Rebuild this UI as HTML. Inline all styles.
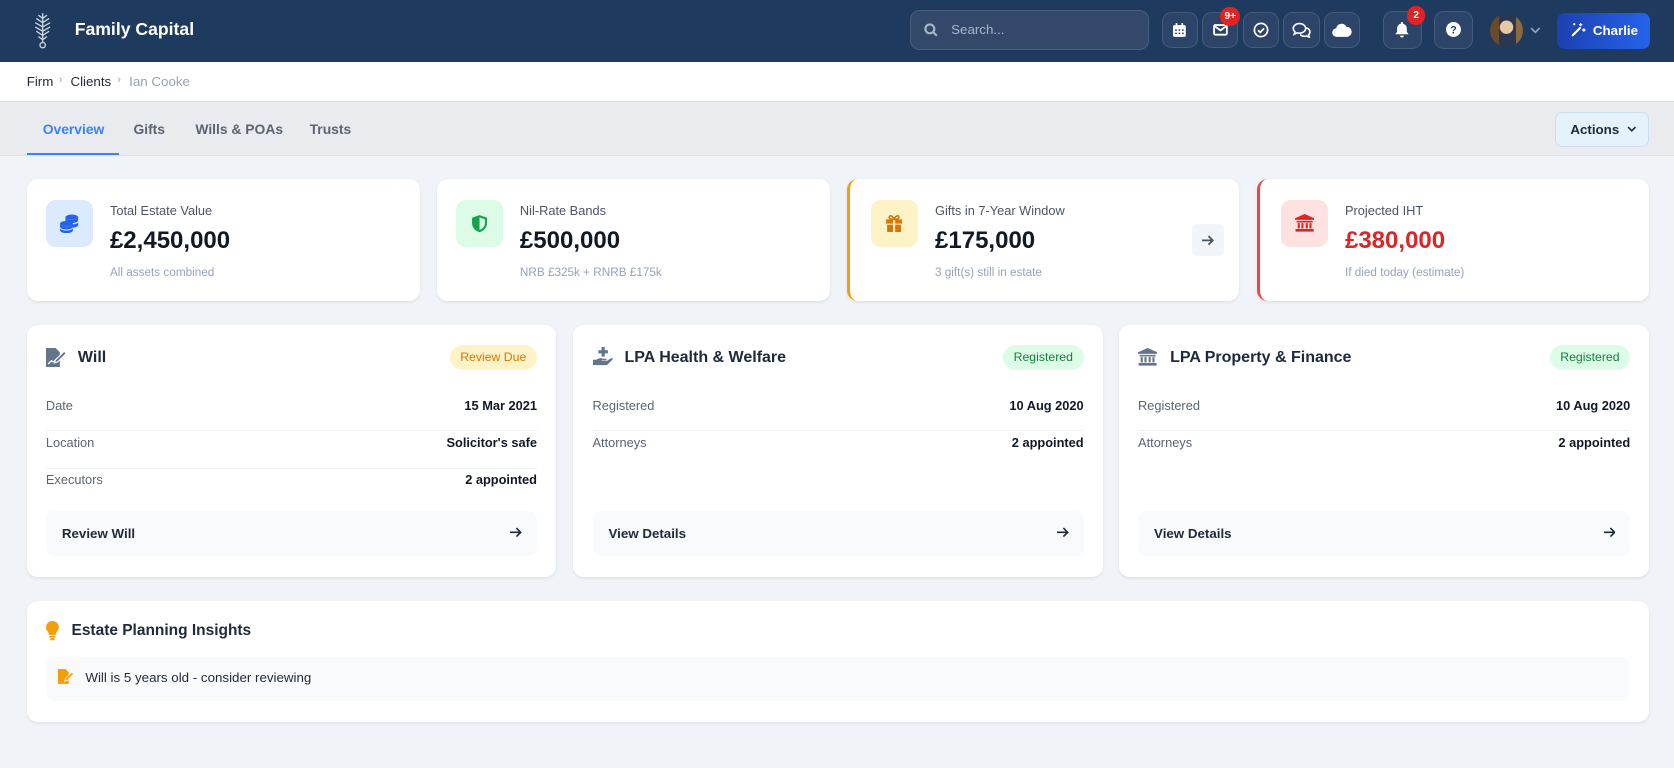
<!DOCTYPE html>
<html><head><meta charset="utf-8"><style>
*{box-sizing:border-box;margin:0;padding:0}
html,body{width:1674px;height:768px;overflow:hidden;background:#f0f3f7}
body{font-family:"Liberation Sans",sans-serif;color:#1e293b}
#z{zoom:1.06760;width:1568px;height:720px;position:relative}
.abs{position:absolute}
.hdr{position:absolute;left:0;top:0;width:1568px;height:58px;background:#1f3a5f}
.title{position:absolute;left:70px;top:18px;color:#fff;font-size:16.5px;font-weight:bold}
.search{position:absolute;left:852px;top:9px;width:224px;height:38px;border-radius:9px;background:#34496a;border:1px solid #4a5f7e}
.search span{position:absolute;left:38px;top:11px;color:#a9b6c8;font-size:12.5px}
.ib{position:absolute;top:11px;width:34px;height:34px;border-radius:9px;background:#2c4468;border:1px solid #445b7c;display:flex;align-items:center;justify-content:center}
.badge{position:absolute;background:#e02424;color:#fff;font-size:9.5px;font-weight:bold;border-radius:9px;height:17px;min-width:17px;padding:0 4px;display:flex;align-items:center;justify-content:center}
.crumb{position:absolute;top:58px;left:0;width:1568px;height:37px;background:#fff;font-size:12.5px}
.tabs{position:absolute;top:95px;left:0;width:1568px;height:51px;background:#e9ebef;border-top:1px solid #dfe3e8;border-bottom:1px solid #dfe3e8}
.tab{position:absolute;top:17px;font-size:13px;font-weight:bold;color:#5b6473}
.card{position:absolute;background:#fff;border-radius:10px;box-shadow:0 1px 3px rgba(0,0,0,.08)}
.sicon{position:absolute;left:18px;top:19px;width:44px;height:44px;border-radius:9px;display:flex;align-items:center;justify-content:center}
.slab{position:absolute;left:78px;top:22px;font-size:12px;color:#4b5563}
.sval{position:absolute;left:78px;top:45px;font-size:22.5px;font-weight:bold;color:#111827}
.ssub{position:absolute;left:78px;top:81px;font-size:11px;color:#94a3b8}
.ct{position:absolute;left:48px;top:23px;font-size:15px;font-weight:bold;color:#1e293b}
.pill{position:absolute;right:18px;top:19px;height:24px;border-radius:12px;font-size:11.5px;padding:0 10px;line-height:24px}
.row{position:absolute;left:18px;right:18px;height:34px;font-size:12px;color:#5b6473;border-bottom:1px solid #edf0f3}
.row b{position:absolute;right:0;top:0;color:#111827}
.btn{position:absolute;left:18px;right:18px;top:175px;height:42px;background:#f8fafc;border-radius:8px;font-size:12.5px;font-weight:bold;color:#1e293b}
</style></head><body><div id="z">
<div class="hdr">
 <svg class="abs" style="left:30px;top:11px" width="20" height="36" viewBox="0 0 20 36" fill="none" stroke="#c9d3e0" stroke-width="1.3"><path d="M10 1v27M10 6l-4-3M10 6l4-3M10 10l-6-4M10 10l6-4M10 14l-7-4M10 14l7-4M10 18l-7-4M10 18l7-4M10 22l-6-4M10 22l6-4M10 26l-4-3M10 26l4-3"/><circle cx="10" cy="31" r="2.5"/></svg>
 <div class="title">Family Capital</div>
 <div class="search"><svg class="abs" style="left:13px;top:12px" width="13" height="13" viewBox="0 0 13 13" fill="none" stroke="#a9b6c8" stroke-width="2"><circle cx="5.5" cy="5.5" r="4.2"/><path d="M8.7 8.7l3.3 3.3"/></svg><span>Search...</span></div>
 <div class="ib" style="left:1088px"><svg width="12" height="13" viewBox="0 0 12 13" fill="#fff"><rect x="0" y="2" width="12" height="11" rx="1.5"/><rect x="2.5" y="0" width="1.6" height="3"/><rect x="7.9" y="0" width="1.6" height="3"/><path d="M2 6h1.6v1.4H2zM5.2 6h1.6v1.4H5.2zM8.4 6h1.6v1.4H8.4zM2 9h1.6v1.4H2zM5.2 9h1.6v1.4H5.2zM8.4 9h1.6v1.4H8.4z" fill="#2c4468"/></svg></div>
 <div class="ib" style="left:1126px"><svg width="14" height="11" viewBox="0 0 14 11" fill="none" stroke="#fff" stroke-width="1.7"><rect x="1" y="1" width="12" height="9" rx="1.2"/><path d="M1.5 2l5.5 4 5.5-4"/></svg></div>
 <div class="badge" style="left:1143px;top:7px">9+</div>
 <div class="ib" style="left:1164px"><svg width="15" height="15" viewBox="0 0 15 15" fill="none" stroke="#fff" stroke-width="1.6"><circle cx="7.5" cy="7.5" r="6.2"/><path d="M4.8 7.7l2 2 3.6-3.8"/></svg></div>
 <div class="ib" style="left:1202px"><svg width="18" height="15" viewBox="0 0 18 15" fill="none" stroke="#fff" stroke-width="1.5"><path d="M7 1.5c3.3 0 5.8 2 5.8 4.5S10.3 10.5 7 10.5c-.8 0-1.5-.1-2.2-.3L2 11.5l.8-2.4C1.8 8.3 1.2 7.2 1.2 6 1.2 3.5 3.7 1.5 7 1.5z"/><path d="M13.5 5.5c2 .7 3.3 2.2 3.3 3.9 0 1-.5 2-1.3 2.7l.6 2-2.3-1c-.6.2-1.3.3-2 .3-1.7 0-3.2-.6-4.1-1.6"/></svg></div>
 <div class="ib" style="left:1240px"><svg width="18" height="13" viewBox="0 0 18 13" fill="#fff"><path d="M4.5 13A4 4 0 014 5a5 5 0 019.4-1.5A4.5 4.5 0 0114 13z"/></svg></div>
 <div class="ib" style="left:1295px;top:10px;width:37px;height:36px"><svg width="13" height="15" viewBox="0 0 13 15" fill="#fff"><path d="M6.5 0c.6 0 1 .4 1 1v.6c2.2.5 3.6 2.3 3.6 4.6v3l1.6 2.3H.3l1.6-2.3v-3c0-2.3 1.4-4.1 3.6-4.6V1c0-.6.4-1 1-1zM4.8 12.8h3.4a1.7 1.7 0 01-3.4 0z"/></svg></div>
 <div class="badge" style="left:1318px;top:6px">2</div>
 <div class="ib" style="left:1343px;top:10px;width:37px;height:36px"><svg width="14" height="14" viewBox="0 0 14 14"><circle cx="7" cy="7" r="7" fill="#fff"/><text x="7" y="10.8" font-size="10" font-weight="bold" text-anchor="middle" fill="#1f3a5f" font-family="Liberation Sans">?</text></svg></div>
 <div class="abs" style="left:1396px;top:13px;width:31px;height:31px;border-radius:50%;background:radial-gradient(circle at 50% 40%,#e8c6a8 0 25%,#2b3650 27% 100%);overflow:hidden"><div class="abs" style="left:0;top:0;width:8px;height:31px;background:#6b4a2b"></div><div class="abs" style="right:0;top:0;width:7px;height:31px;background:#8a6a3e"></div></div>
 <svg class="abs" style="left:1433px;top:25px" width="10" height="7" viewBox="0 0 10 7" fill="none" stroke="#9aa8bb" stroke-width="1.5"><path d="M1 1l4 4 4-4"/></svg>
 <div class="abs" style="left:1458px;top:12px;width:88px;height:34px;border-radius:7px;background:linear-gradient(90deg,#1e40af,#2563eb);color:#fff;font-size:12.5px;font-weight:bold;line-height:34px;padding-left:34px">Charlie</div>
 <svg class="abs" style="left:1471px;top:21px" width="15" height="15" viewBox="0 0 15 15" fill="none" stroke="#fff" stroke-width="2"><path d="M2 13L10 5"/><path d="M10 1v3M8.5 2.5h3M13 6v3M11.5 7.5h3M4 1v2M3 2h2" stroke-width="1.3"/></svg>
</div>
<div class="crumb"><span class="abs" style="left:25px;top:11px;color:#1e293b">Firm</span><span class="abs" style="left:55px;top:11px;color:#9aa3ae;font-size:10px">›</span><span class="abs" style="left:66px;top:11px;color:#1e293b">Clients</span><span class="abs" style="left:110px;top:11px;color:#9aa3ae;font-size:10px">›</span><span class="abs" style="left:121px;top:11px;color:#94a3b8">Ian Cooke</span></div>
<div class="tabs">
 <span class="tab" style="left:40px;color:#3b82f6">Overview</span>
 <div class="abs" style="left:25px;top:47px;width:86px;height:2px;background:#3b82f6"></div>
 <span class="tab" style="left:125px">Gifts</span>
 <span class="tab" style="left:183px">Wills &amp; POAs</span>
 <span class="tab" style="left:290px">Trusts</span>
 <div class="abs" style="left:1457px;top:9px;width:88px;height:33px;border-radius:7px;background:#e6f2fb;border:1px solid #c9dff0;font-size:12.5px;font-weight:bold;color:#1e293b;line-height:31px;padding-left:13px">Actions<svg class="abs" style="left:66px;top:12px" width="9" height="6" viewBox="0 0 9 6" fill="none" stroke="#1e293b" stroke-width="1.5"><path d="M1 1l3.5 3.5L8 1"/></svg></div>
</div>

<div class="card" style="left:25px;top:168px;width:368px;height:114px">
 <div class="sicon" style="background:#dbeafe"><svg width="20" height="18" viewBox="0 0 20 18" fill="#2563eb"><ellipse cx="12" cy="3" rx="6" ry="2.5"/><path d="M6 3v3c0 1.4 2.7 2.5 6 2.5s6-1.1 6-2.5V3c0 1.4-2.7 2.5-6 2.5S6 4.4 6 3zM12 9.8v3c2.6 0 6-.9 6-2.3V7.5c0 1.4-3 2.3-6 2.3z"/><ellipse cx="7" cy="9" rx="6" ry="2.5"/><path d="M1 9v3c0 1.4 2.7 2.5 6 2.5s6-1.1 6-2.5V9c0 1.4-2.7 2.5-6 2.5S1 10.4 1 9zM1 13v2.5C1 16.9 3.7 18 7 18s6-1.1 6-2.5V13c0 1.4-2.7 2.5-6 2.5S1 14.4 1 13z"/></svg></div>
 <div class="slab">Total Estate Value</div><div class="sval">£2,450,000</div><div class="ssub">All assets combined</div>
</div>
<div class="card" style="left:409px;top:168px;width:368px;height:114px">
 <div class="sicon" style="background:#dcfce7"><svg width="16" height="18" viewBox="0 0 16 18"><path d="M8 1l7 2.5v5c0 4.2-3 7.4-7 8.5-4-1.1-7-4.3-7-8.5v-5z" fill="#16a34a"/><path d="M8 3.2l5 1.8v3.6c0 3-2.1 5.4-5 6.3z" fill="#dcfce7"/></svg></div>
 <div class="slab">Nil-Rate Bands</div><div class="sval">£500,000</div><div class="ssub">NRB £325k + RNRB £175k</div>
</div>
<div class="card" style="left:793px;top:168px;width:368px;height:114px;border-left:3px solid #f59e0b">
 <div class="sicon" style="left:20px;background:#fef3c7"><svg width="17" height="17" viewBox="0 0 17 17" fill="#d97706"><path d="M1 5h15v4H1zM2 10h13v7H2z"/><path d="M7.5 5h2v12h-2z" fill="#fef3c7"/><path d="M8.5 5C7 1 4 1 4 3s3 2 4.5 2zM8.5 5C10 1 13 1 13 3s-3 2-4.5 2z" fill="none" stroke="#d97706" stroke-width="1.5"/></svg></div>
 <div class="slab" style="left:80px">Gifts in 7-Year Window</div><div class="sval" style="left:80px">£175,000</div><div class="ssub" style="left:80px">3 gift(s) still in estate</div>
 <div class="abs" style="left:321px;top:42px;width:30px;height:30px;border-radius:6px;background:#f1f5f9"><svg class="abs" style="left:8px;top:9px" width="13" height="12" viewBox="0 0 13 12" fill="none" stroke="#475569" stroke-width="1.7"><path d="M1 6h10M7 2l4 4-4 4"/></svg></div>
</div>
<div class="card" style="left:1177px;top:168px;width:368px;height:114px;border-left:3px solid #ef4444">
 <div class="sicon" style="left:20px;background:#fee2e2"><svg width="18" height="17" viewBox="0 0 18 17" fill="#dc2626"><path d="M9 0l9 4v1.5H0V4z"/><path d="M1.5 6.5h15v1.5h-15zM2.5 8.5h2v5h-2zM6 8.5h2v5H6zM10 8.5h2v5h-2zM13.5 8.5h2v5h-2zM0.5 14h17v2.5H.5z"/></svg></div>
 <div class="slab" style="left:80px">Projected IHT</div><div class="sval" style="left:80px;color:#dc2626">£380,000</div><div class="ssub" style="left:80px">If died today (estimate)</div>
</div>

<div class="card" style="left:25px;top:304px;width:496px;height:236px">
 <svg class="abs" style="left:18px;top:22px" width="20" height="18" viewBox="0 0 20 18"><path d="M0 0h9l4 4v14H0z" fill="#64748b"/><path d="M2 15l3-3 2 1 3-3" fill="none" stroke="#fff" stroke-width="1.2"/><path d="M9 11l8-8 2 2-8 8-3 1z" fill="#64748b" stroke="#fff" stroke-width="1"/></svg>
 <div class="ct">Will</div>
 <div class="pill" style="background:#fef3c7;color:#d97706">Review Due</div>
 <div class="row" style="top:66px;line-height:20px">Date<b>15 Mar 2021</b></div>
 <div class="row" style="top:101px;line-height:20px">Location<b>Solicitor's safe</b></div>
 <div class="row" style="top:135px;line-height:20px;border:none">Executors<b>2 appointed</b></div>
 <div class="btn"><span class="abs" style="left:15px;top:14px">Review Will</span><svg class="abs" style="right:14px;top:15px" width="11" height="10" viewBox="0 0 11 10" fill="none" stroke="#1e293b" stroke-width="1.5"><path d="M0 5h9.5M6 1l4 4-4 4"/></svg></div>
</div>
<div class="card" style="left:537px;top:304px;width:496px;height:236px">
 <svg class="abs" style="left:18px;top:21px" width="20" height="19" viewBox="0 0 20 19" fill="#64748b"><path d="M8 0h3v3h3v3h-3v3H8V6H5V3h3z"/><path d="M0 12h3l3-1.5c1-.5 2 0 3 .5h3c1 0 1 1.5 0 1.5H8v.5h5l4-2.5c1-.5 2 .7 1.2 1.5L13 17H0z"/></svg>
 <div class="ct">LPA Health &amp; Welfare</div>
 <div class="pill" style="background:#dcfce7;color:#15803d">Registered</div>
 <div class="row" style="top:66px;line-height:20px">Registered<b>10 Aug 2020</b></div>
 <div class="row" style="top:101px;line-height:20px;border:none">Attorneys<b>2 appointed</b></div>
 <div class="btn"><span class="abs" style="left:15px;top:14px">View Details</span><svg class="abs" style="right:14px;top:15px" width="11" height="10" viewBox="0 0 11 10" fill="none" stroke="#1e293b" stroke-width="1.5"><path d="M0 5h9.5M6 1l4 4-4 4"/></svg></div>
</div>
<div class="card" style="left:1048px;top:304px;width:497px;height:236px">
 <svg class="abs" style="left:18px;top:22px" width="18" height="17" viewBox="0 0 18 17" fill="#64748b"><path d="M9 0l9 4v1.5H0V4z"/><path d="M1.5 6.5h15v1.5h-15zM2.5 8.5h2v5h-2zM6 8.5h2v5H6zM10 8.5h2v5h-2zM13.5 8.5h2v5h-2zM0.5 14h17v2.5H.5z"/></svg>
 <div class="ct">LPA Property &amp; Finance</div>
 <div class="pill" style="background:#dcfce7;color:#15803d">Registered</div>
 <div class="row" style="top:66px;line-height:20px">Registered<b>10 Aug 2020</b></div>
 <div class="row" style="top:101px;line-height:20px;border:none">Attorneys<b>2 appointed</b></div>
 <div class="btn"><span class="abs" style="left:15px;top:14px">View Details</span><svg class="abs" style="right:14px;top:15px" width="11" height="10" viewBox="0 0 11 10" fill="none" stroke="#1e293b" stroke-width="1.5"><path d="M0 5h9.5M6 1l4 4-4 4"/></svg></div>
</div>

<div class="card" style="left:25px;top:563px;width:1520px;height:113px">
 <svg class="abs" style="left:18px;top:19px" width="12" height="18" viewBox="0 0 12 18" fill="#f59e0b"><path d="M6 0a6 6 0 00-6 6c0 2.2 1.5 3.5 2.5 5v2h7v-2c1-1.5 2.5-2.8 2.5-5a6 6 0 00-6-6zM3 14h6v1.5H3zM4 16h4v2H4z"/></svg>
 <div class="abs" style="left:42px;top:20px;font-size:14.5px;font-weight:bold;color:#1e293b">Estate Planning Insights</div>
 <div class="abs" style="left:18px;top:52px;width:1484px;height:42px;background:#f8fafc;border-radius:8px">
  <svg class="abs" style="left:11px;top:12px" width="15" height="14" viewBox="0 0 15 14" fill="#f59e0b"><path d="M0 0h7l3 3v11H0z"/><path d="M7 9l6-6 1.7 1.7-6 6-2.5.8z" stroke="#f8fafc" stroke-width=".8"/></svg>
  <span class="abs" style="left:37px;top:13px;font-size:12.5px;color:#1e293b">Will is 5 years old - consider reviewing</span>
 </div>
</div>
</div></body></html>
